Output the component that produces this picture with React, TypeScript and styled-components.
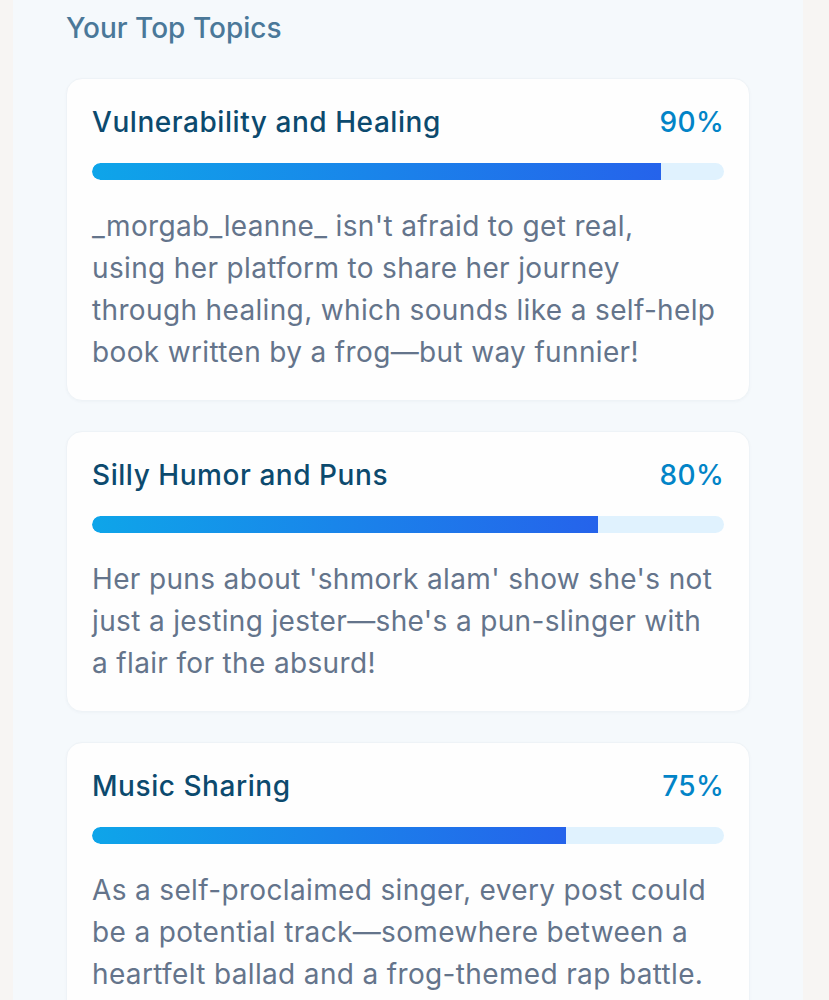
import React from 'react'
import styled, { createGlobalStyle } from 'styled-components'

const GlobalStyle = createGlobalStyle`
  html, body {
    margin: 0;
    padding: 0;
    background: #f7f5f3;
  }
  body {
    font-family: Inter, 'Open Sans', 'Liberation Sans', sans-serif;
  }
`

// line breaks kept as in the design
const topics = [
  {
    name: 'Vulnerability and Healing',
    score: 90,
    text: "_morgab_leanne_ isn't afraid to get real,\nusing her platform to share her journey\nthrough healing, which sounds like a self-help\nbook written by a frog\u2014but way funnier!",
  },
  {
    name: 'Silly Humor and Puns',
    score: 80,
    text: "Her puns about 'shmork alam' show she's not\njust a jesting jester\u2014she's a pun-slinger with\na flair for the absurd!",
  },
  {
    name: 'Music Sharing',
    score: 75,
    text: 'As a self-proclaimed singer, every post could\nbe a potential track\u2014somewhere between a\nheartfelt ballad and a frog-themed rap battle.',
  },
]

export default function App() {
  return (
    <>
      <GlobalStyle />
      <Panel>
        <Heading>Your Top Topics</Heading>
        <CardList>
          {topics.map((t) => (
            <Card key={t.name}>
              <CardHead>
                <TopicName>{t.name}</TopicName>
                <Score>{t.score}%</Score>
              </CardHead>
              <Track>
                <Fill style={{ width: `${t.score}%` }} />
              </Track>
              <Blurb>{t.text}</Blurb>
            </Card>
          ))}
        </CardList>
      </Panel>
    </>
  )
}

const Panel = styled.div`
  margin: 0 26px 0 13px;
  min-height: 1000px;
  background: #f5f9fc;
  padding: 8px 53px 40px;
  box-sizing: border-box;
`

const Heading = styled.h2`
  margin: 0;
  font-size: 28px;
  line-height: 40px;
  font-weight: 500;
  color: #4a7899;
`

const CardList = styled.div`
  display: flex;
  flex-direction: column;
  gap: 30px;
  margin-top: 30px;
`

const Card = styled.div`
  background: #fefefe;
  border: 1px solid #eef3f7;
  border-radius: 16px;
  padding: 25px 25px 27px;
  box-shadow: 0 1px 3px rgba(15, 60, 100, 0.03);
`

const CardHead = styled.div`
  display: flex;
  align-items: center;
  justify-content: space-between;
`

const TopicName = styled.h3`
  margin: 0;
  font-size: 28px;
  line-height: 36px;
  font-weight: 500;
  letter-spacing: 0.55px;
  color: #0c4a6e;
`

const Score = styled.span`
  font-size: 28px;
  line-height: 36px;
  font-weight: 500;
  letter-spacing: 0.3px;
  color: #0284c7;
`

const Track = styled.div`
  margin-top: 23px;
  height: 17px;
  border-radius: 9px;
  background: #e0f2fe;
  overflow: hidden;
`

const Fill = styled.div`
  height: 100%;
  border-radius: 9px 0 0 9px;
  background: linear-gradient(90deg, #0ea5e9, #2563eb);
`

const Blurb = styled.p`
  margin: 25px 0 0;
  font-size: 28px;
  line-height: 42px;
  letter-spacing: 0.35px;
  white-space: pre-line;
  color: #64748b;
`
